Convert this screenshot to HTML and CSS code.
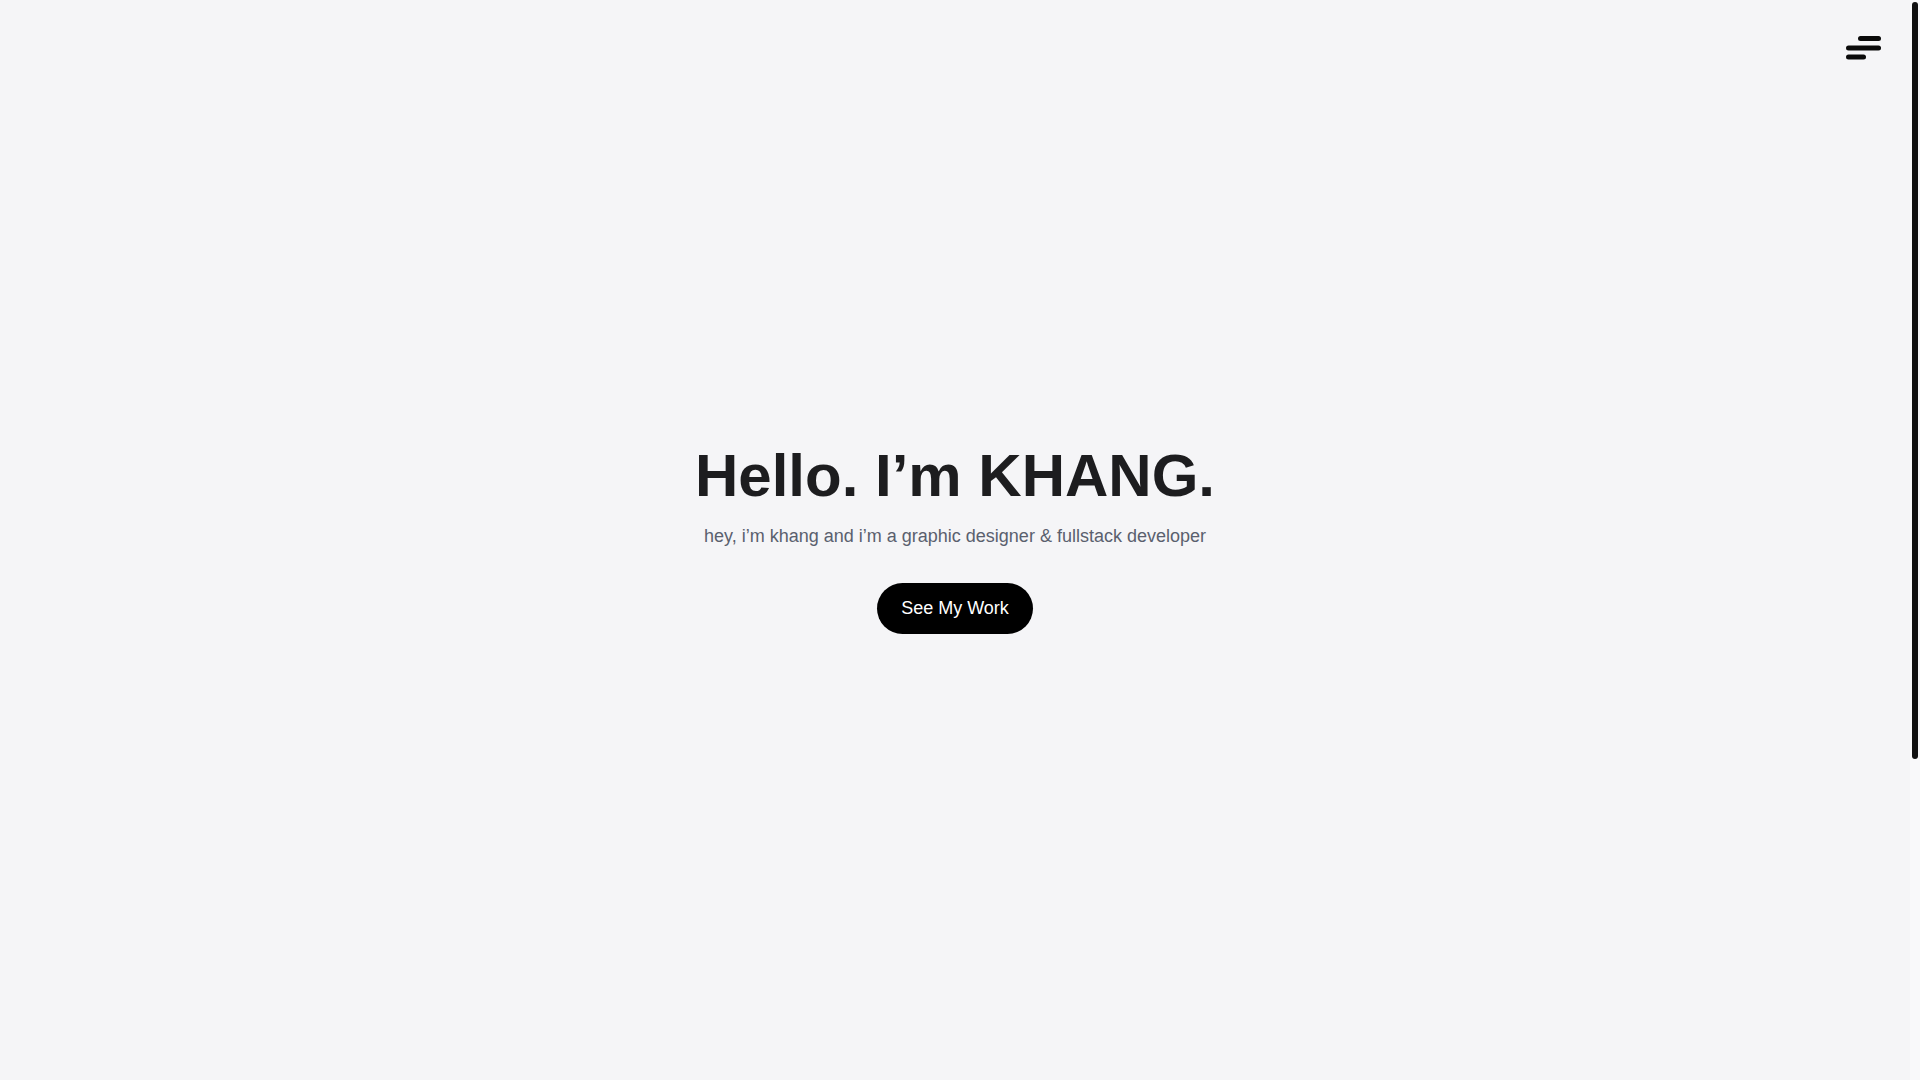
FILE: index.html
```html
<!DOCTYPE html>
<html lang="en">
<head>
<meta charset="utf-8">
<title>Khang</title>
<link rel="stylesheet" href="styles.css">
</head>
<body>
  <main class="page">
    <button class="menu-btn" aria-label="Menu">
      <svg class="menu-icon" width="40" height="32" viewBox="0 0 40 32">
        <line x1="19.5" y1="8.5" x2="37.5" y2="8.5"/>
        <line x1="7.5" y1="18" x2="37.5" y2="18"/>
        <line x1="7.5" y1="27" x2="22.5" y2="27"/>
      </svg>
    </button>
    <section class="hero">
      <h1 class="hero-title">Hello. I’m KHANG.</h1>
      <p class="hero-sub">hey, i’m khang and i’m a graphic designer &amp; fullstack developer</p>
      <a class="hero-btn" href="#work">See My Work</a>
    </section>
  </main>
  <div class="scroll-track" aria-hidden="true">
    <div class="scroll-thumb"></div>
  </div>
</body>
</html>
```

FILE: styles.css
```css
html {
  background: #f5f5f7;
}
body {
  margin: 0;
  height: 100vh;
  overflow: hidden;
  display: flex;
  background: #f5f5f7;
  font-family: "Liberation Sans", Arial, sans-serif;
}
.page {
  position: relative;
  flex: 1;
  min-width: 0;
}
.scroll-track {
  width: 10px;
  flex: none;
  background: #f9f9fa;
  display: flex;
  justify-content: center;
  padding-top: 2px;
  box-sizing: border-box;
}
.scroll-thumb {
  width: 6px;
  height: 757px;
  background: #111111;
  border-radius: 3px;
}
.menu-btn {
  position: absolute;
  top: 30px;
  right: 29px;
  padding: 0;
  border: 0;
  background: none;
  cursor: pointer;
  line-height: 0;
}
.menu-icon line {
  stroke: #0a0a0a;
  stroke-width: 5;
  stroke-linecap: round;
}
.hero {
  height: 100vh;
  box-sizing: border-box;
  padding-bottom: 6px;
  display: flex;
  flex-direction: column;
  align-items: center;
  justify-content: center;
  text-align: center;
}
.hero-title {
  margin: 0;
  font-size: 60px;
  line-height: 72px;
  font-weight: 700;
  color: #1d1d1f;
}
.hero-sub {
  margin: 11px 0 0;
  font-size: 18px;
  line-height: 27px;
  color: #5a606e;
}
.hero-btn {
  margin-top: 33px;
  display: inline-block;
  padding: 12px 24px;
  font-size: 18px;
  line-height: 27px;
  color: #ffffff;
  background: #000000;
  border-radius: 999px;
  text-decoration: none;
}
```
